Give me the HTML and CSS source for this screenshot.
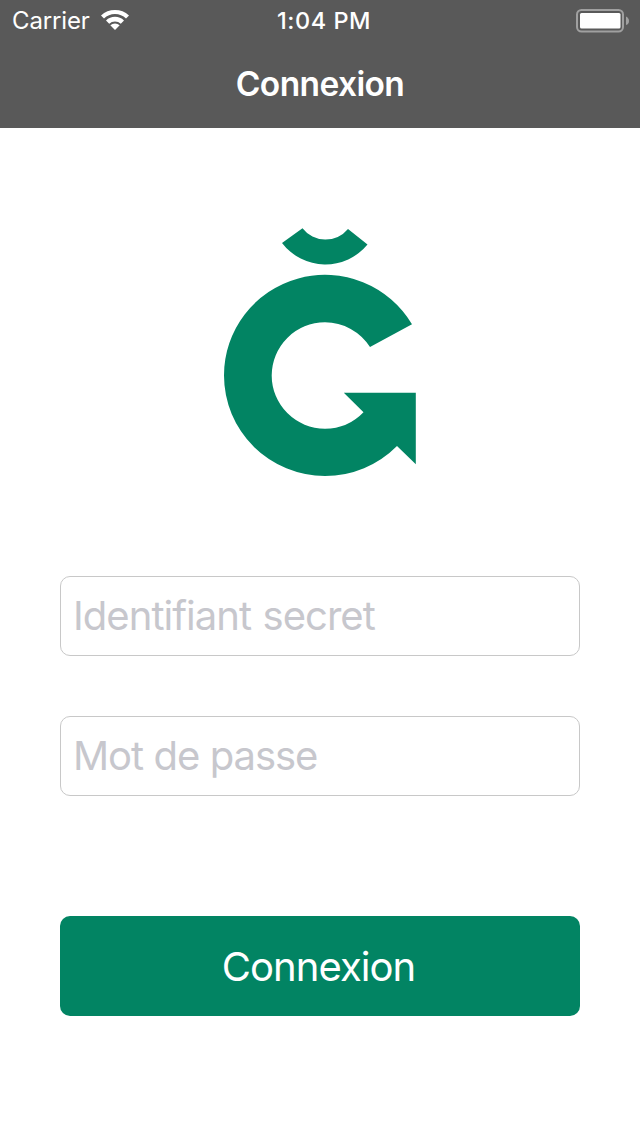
FILE: index.html
```html
<!DOCTYPE html>
<html lang="fr">
<head>
<meta charset="utf-8">
<title>Connexion</title>
<link rel="stylesheet" href="styles.css">
</head>
<body>
<header class="header">
  <div class="status">
    <div class="carrier"><span class="carrier-name">Carrier</span>
      <svg class="wifi" width="28" height="20" viewBox="0 0 28 20" fill="#fff"><path d="M0 5.500A20.600 20.600 0 0 1 28 5.500L25 8.500A15.500 15.500 0 0 0 3 8.500Z"/><path d="M5 10.500A12.800 12.800 0 0 1 23 10.500L19.800 13.700A8.500 8.500 0 0 0 8.200 13.700Z"/><path d="M9.300 15.300A7 7 0 0 1 18.700 15.300L14 20Z"/></svg>
    </div>
    <span class="time">1:04 PM</span>
    <svg class="battery" width="53" height="24" viewBox="0 0 53 24"><rect x="1" y="1" width="46" height="21.500" rx="4.500" fill="none" stroke="#a0a0a0" stroke-width="2"/><rect x="4" y="4" width="40.500" height="15.500" rx="1.500" fill="#fff"/><path d="M50 7.500Q53 9 53 12T50 16Z" fill="#a0a0a0"/></svg>
  </div>
  <h1 class="title">Connexion</h1>
</header>
<main class="content">
  <svg class="logo" width="192" height="248" viewBox="224 228 192 248" fill="#028463"><path d="M302.500 228.200A29 29 0 0 0 348 229L367.500 244.500A54.500 54.500 0 0 1 282 243Z"/><path d="M412 324.300A101 100.500 0 0 0 224 375.500A101 100.500 0 0 0 325 476A101 100.500 0 0 0 397 446L415.800 464.300V392.800H343.800L363.500 412.300A53.300 53.200 0 0 1 325 428.700A53.300 53.200 0 0 1 271.700 375.500A53.300 53.200 0 0 1 325 322.300A53.300 53.200 0 0 1 370 347Z"/></svg>
  <form class="form">
    <input class="field field-id" type="text" placeholder="Identifiant secret" aria-label="Identifiant secret">
    <input class="field field-password" type="password" placeholder="Mot de passe" aria-label="Mot de passe">
    <button class="submit" type="button"><span class="submit-label">Connexion</span></button>
  </form>
</main>
</body>
</html>
```
FILE: styles.css
```css
* { box-sizing: border-box; }
body { margin: 0; min-height: 1136px; background: #fff; font-family: Inter, "Liberation Sans", sans-serif; }
.header { height: 128px; background: #595959; color: #fff; }
.status { height: 41px; display: grid; grid-template-columns: 1fr auto 1fr; align-items: center; padding: 1px 11px 0 12px; font-size: 24px; line-height: 40px; }
.carrier { display: flex; align-items: center; gap: 11px; }
.carrier-name { letter-spacing: -.15px; }
.wifi { margin-top: -2px; }
.time { margin-left: 7px; font-weight: 500; font-size: 23.5px; letter-spacing: .55px; }
.battery { justify-self: end; }
.title { margin: 0; height: 87px; line-height: 86px; text-align: center; font-size: 33.5px; font-weight: 600; letter-spacing: -.6px; }
.content { display: flex; flex-direction: column; align-items: center; padding-top: 100px; }
.form { width: 520px; margin-top: 100px; display: flex; flex-direction: column; }
.field { height: 80px; margin: 0 0 60px; padding: 0 13px 1px 12px; border: 1px solid #c8c8c8; border-radius: 10px; background: #fff; font: 40px Inter, sans-serif; outline: 0; }
.field-id { letter-spacing: -.95px; word-spacing: 1px; }
.field-password { letter-spacing: -1.1px; word-spacing: .5px; }
.field::placeholder { color: #c7c7cd; opacity: 1; }
.submit { height: 100px; margin-top: 60px; border: 0; border-radius: 10px; background: #028463; color: #fff; font: 40px Inter, sans-serif; letter-spacing: -.95px; padding: 0 3px 0 0; }
```
